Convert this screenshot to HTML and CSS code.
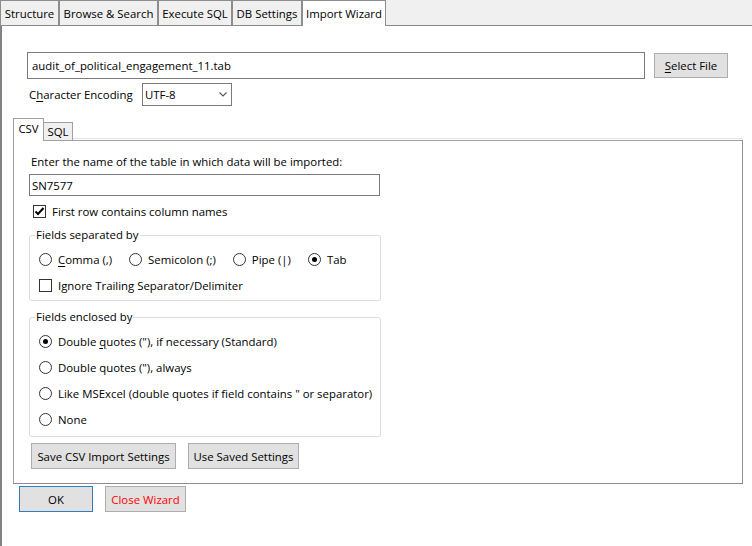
FILE: index.html
```html
<!DOCTYPE html>
<html lang="en">
<head>
<meta charset="utf-8">
<title>Import Wizard</title>
<link rel="stylesheet" href="styles.css">
</head>
<body>
<div class="app">
  <div class="tabbar">
    <div class="tab tab-structure">Structure</div>
    <div class="tab tab-browse">Browse &amp; Search</div>
    <div class="tab tab-exec">Execute SQL</div>
    <div class="tab tab-db">DB Settings</div>
    <div class="tab tab-import active">Import Wizard</div>
  </div>
  <div class="page">
    <div class="file-row">
      <div class="textbox file-box">audit_of_political_engagement_11.tab</div>
      <button class="btn btn-select"><u>S</u>elect File</button>
    </div>
    <div class="enc-row">
      <span class="enc-label">C<u>h</u>aracter Encoding</span>
      <div class="combo">
        <span>UTF-8</span>
        <svg class="chevron" width="8" height="5" viewBox="0 0 8 5"><path d="M0.5 0.5 L4 4 L7.5 0.5" fill="none" stroke="#5a5a5a" stroke-width="1.2"/></svg>
      </div>
    </div>
    <div class="subtabs">
      <div class="subtab active">CSV</div>
      <div class="subtab">SQL</div>
      <div class="subtab-fill"></div>
    </div>
    <div class="csv-panel">
      <div class="prompt">Enter the name of the table in which data will be imported:</div>
      <div class="textbox table-box">SN7577</div>
      <div class="opt check-row">
        <span class="check on"><svg width="11" height="11" viewBox="0 0 11 11"><path d="M1.5 5.5 L4 8 L9.5 2" fill="none" stroke="#000" stroke-width="2"/></svg></span>
        <span>First row contains column names</span>
      </div>
      <fieldset class="group group-sep">
        <legend>Fields separated by</legend>
        <div class="radio-row">
          <div class="opt"><span class="radio"></span><span><u>C</u>omma (,)</span></div>
          <div class="opt"><span class="radio"></span><span>Semicolon (;)</span></div>
          <div class="opt"><span class="radio"></span><span>Pipe (|)</span></div>
          <div class="opt"><span class="radio on"></span><span>Tab</span></div>
        </div>
        <div class="opt trailing">
          <span class="check"></span>
          <span>Ignore Trailing Separator/Delimiter</span>
        </div>
      </fieldset>
      <fieldset class="group group-enc">
        <legend>Fields enclosed by</legend>
        <div class="radio-col">
          <div class="opt"><span class="radio on"></span><span>Double <u>q</u>uotes ("), if necessary (Standard)</span></div>
          <div class="opt"><span class="radio"></span><span>Double quotes ("), always</span></div>
          <div class="opt"><span class="radio"></span><span>Like MSExcel (double quotes if field contains " or separator)</span></div>
          <div class="opt"><span class="radio"></span><span>None</span></div>
        </div>
      </fieldset>
      <div class="panel-buttons">
        <button class="btn btn-save">Save CSV Import Settings</button>
        <button class="btn btn-use">Use Saved Settings</button>
      </div>
    </div>
    <div class="bottom-row">
      <button class="btn btn-ok">OK</button>
      <button class="btn btn-close">Close Wizard</button>
    </div>
  </div>
</div>
</body>
</html>
```

FILE: styles.css
```css
* { box-sizing: border-box; }
html, body { margin: 0; padding: 0; background: #fff; }
body {
  font-family: "Open Sans", "Noto Sans", sans-serif;
  font-size: 11.4px;
  color: #000;
  width: 752px;
  height: 546px;
  overflow: hidden;
}
u { text-underline-offset: 2px; text-decoration-thickness: 1px; }

.app { display: flex; flex-direction: column; height: 546px; }

/* top tab bar */
.tabbar {
  display: flex;
  align-items: flex-start;
  height: 26px;
  background: #f0f0f0;
  border-bottom: 1px solid #8a8a8a;
}
.tab {
  height: 25px;
  display: flex;
  align-items: center;
  justify-content: center;
  border: 1px solid #8d8d8d;
  border-bottom: none;
  background: #f0f0f0;
  white-space: nowrap;
}
.tab-structure { width: 59px; }
.tab-browse { width: 99px; }
.tab-exec { width: 74px; }
.tab-db { width: 70px; }
.tab-import { width: 84px; }
.tab.active { background: #fff; height: 26px; }

/* page */
.page {
  flex: 1;
  display: flex;
  flex-direction: column;
  align-items: flex-start;
  border-left: 2px solid #828282;
  padding: 0 9px 0 11px;
}

.textbox {
  display: flex;
  align-items: center;
  border: 1px solid #7a7a7a;
  background: #fff;
  white-space: nowrap;
}
.btn {
  font: inherit;
  color: #000;
  background: #e1e1e1;
  border: 1px solid #adadad;
  padding: 0;
  height: 26px;
  white-space: nowrap;
}

.file-row {
  display: flex;
  align-items: center;
  gap: 9px;
  margin: 26px 0 0 14px;
}
.file-box { width: 618px; height: 27px; padding-left: 4px; }
.btn-select { width: 74px; height: 25px; }

.enc-row {
  display: flex;
  align-items: center;
  margin: 4px 0 0 16px;
}
.enc-label { width: 113px; }
.combo {
  width: 90px;
  height: 23px;
  border: 1px solid #7a7a7a;
  display: flex;
  align-items: center;
  justify-content: space-between;
  padding: 0 4px 0 2px;
}

/* inner tabs */
.subtabs {
  align-self: stretch;
  display: flex;
  align-items: flex-end;
  height: 22px;
  margin-top: 12px;
}
.subtab {
  height: 18px;
  width: 30px;
  display: flex;
  align-items: center;
  justify-content: center;
  border: 1px solid #a0a0a0;
  border-bottom: none;
  background: #f0f0f0;
}
.subtab.active {
  width: 31px;
  height: 23px;
  margin-bottom: -1px;
  background: #fff;
  position: relative;
  z-index: 1;
  padding-bottom: 3px;
}
.subtab + .subtab { margin-left: -1px; }
.subtab-fill {
  flex: 1;
  height: 3px;
  border-bottom: 1px solid #e3e3e3;
  margin-bottom: 1px;
}

.csv-panel {
  align-self: stretch;
  display: flex;
  flex-direction: column;
  align-items: flex-start;
  border: 1px solid;
  border-color: #a0a0a0 #8e8b95 #8e8b95 #a0a0a0;
  padding: 13px 0 14px 15px;
}
.prompt { margin-left: 2px; line-height: 16px; }
.table-box { width: 351px; height: 22px; margin-top: 4px; padding-left: 2px; }

.opt {
  display: flex;
  align-items: center;
  gap: 6px;
  height: 16px;
  white-space: nowrap;
}
.check {
  flex-shrink: 0;
  width: 13px;
  height: 13px;
  border: 1px solid #333;
  background: #fff;
  display: flex;
  align-items: center;
  justify-content: center;
}
.radio {
  flex-shrink: 0;
  width: 13px;
  height: 13px;
  border: 1px solid #333;
  border-radius: 50%;
  background: #fff;
  display: flex;
  align-items: center;
  justify-content: center;
}
.radio.on::after {
  content: "";
  width: 5px;
  height: 5px;
  border-radius: 50%;
  background: #000;
}
.check-row { margin: 7px 0 0 4px; }

.group {
  width: 352px;
  margin: 8px 0 0 0;
  border: 1px solid #dcdcdc;
  border-radius: 3px;
  padding: 8px 9px 7px 9px;
  min-width: 0;
}
.group legend {
  padding: 0 1px;
  margin-left: -4px;
  line-height: 16px;
}
.radio-row { display: flex; gap: 17px; }
.trailing { margin-top: 10px; }
.group-enc { padding-bottom: 9px; }
.radio-col { display: flex; flex-direction: column; gap: 10px; }

.panel-buttons {
  display: flex;
  gap: 12px;
  margin: 6px 0 0 2px;
}
.btn-save { width: 145px; }
.btn-use { width: 111px; }

.bottom-row {
  display: flex;
  gap: 12px;
  margin: 2px 0 0 6px;
}
.btn-ok { width: 74px; border-color: #2f7dc3; }
.btn-close { width: 81px; color: #ff0000; }
```
